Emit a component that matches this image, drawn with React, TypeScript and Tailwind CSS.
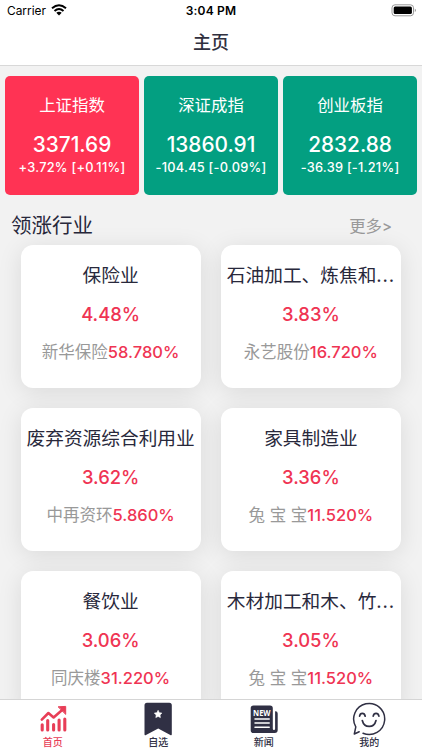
import type { ReactNode } from "react";

interface MarketIndex {
  name: string;
  value: string;
  change: string;
  up: boolean;
}

interface Industry {
  name: string;
  rate: string;
  stock: string;
  stockRate: string;
}

const indexes: MarketIndex[] = [
  { name: "上证指数", value: "3371.69", change: "+3.72% [+0.11%]", up: true },
  { name: "深证成指", value: "13860.91", change: "-104.45 [-0.09%]", up: false },
  { name: "创业板指", value: "2832.88", change: "-36.39 [-1.21%]", up: false },
];

const industries: Industry[] = [
  { name: "保险业", rate: "4.48%", stock: "新华保险", stockRate: "58.780%" },
  { name: "石油加工、炼焦和...", rate: "3.83%", stock: "永艺股份", stockRate: "16.720%" },
  { name: "废弃资源综合利用业", rate: "3.62%", stock: "中再资环", stockRate: "5.860%" },
  { name: "家具制造业", rate: "3.36%", stock: "兔 宝 宝", stockRate: "11.520%" },
  { name: "餐饮业", rate: "3.06%", stock: "同庆楼", stockRate: "31.220%" },
  { name: "木材加工和木、竹...", rate: "3.05%", stock: "兔 宝 宝", stockRate: "11.520%" },
];

const ChartIcon = () => (
  <svg width="34" height="34" viewBox="0 0 34 34" fill="none" stroke="currentColor" strokeLinecap="round">
    <path d="M5.8 17.6L12.4 11L17.6 15.4L27 7.3" strokeWidth="2.6" strokeLinejoin="round" />
    <path d="M22.5 4.8L29.7 4.4V12Z" fill="currentColor" strokeWidth="1" strokeLinejoin="round" />
    <path d="M6.2 22.8V28M11.7 18.6V28M17.6 22.6V28M23.1 18V28M28.8 17V28" strokeWidth="3.1" />
  </svg>
);

const BookmarkIcon = () => (
  <svg width="34" height="34" viewBox="0 0 34 34" fill="currentColor">
    <path d="M6 .8H28.3Q30.8 .8 30.8 3.3V32.3Q30.8 33.8 29.3 33L17.2 26.5L5 33Q3.5 33.8 3.5 32.3V3.3Q3.5 .8 6 .8Z" />
    <path d="M17.1 8.3L18.3 10.7L20.9 11.1L19 13L19.4 15.6L17.1 14.4L14.8 15.6L15.2 13L13.3 11.1L15.9 10.7Z" fill="white" stroke="white" strokeWidth=".6" strokeLinejoin="round" />
  </svg>
);

const NewsIcon = () => (
  <svg width="34" height="34" viewBox="0 0 34 34" fill="currentColor">
    <path d="M6.5 3.5H23Q25.8 3.5 25.8 6.3V26.8Q25.8 28 27 28Q28.1 28 28.1 26.8V9.3H28.5Q30.7 9.3 30.7 11.5V28Q30.7 31 27.7 31H6.5Q3.7 31 3.7 28.2V6.3Q3.7 3.5 6.5 3.5Z" />
    <text x="14.8" y="13.6" textAnchor="middle" fontSize="8.6" fontWeight="700" fill="white" textLength="17.5" lengthAdjust="spacingAndGlyphs" fontFamily="Open Sans, sans-serif">NEW</text>
    <path d="M8 17H22.2M8 21H22.2M8 25.2H22.2" stroke="white" strokeWidth="1.5" strokeLinecap="round" />
  </svg>
);

const SmileIcon = () => (
  <svg width="34" height="34" viewBox="0 0 34 34" fill="none" stroke="currentColor" strokeWidth="1.5" strokeLinecap="round" strokeLinejoin="round">
    <path d="M11 31.2A15.5 15.5 0 1 0 3.8 24.8L2.3 32L7.2 29.7" />
    <path d="M7.6 14.2C8.2 10.5 12.4 10.5 13.2 14.2M21.2 14.2C21.9 10.5 26.2 10.5 26.9 14.2M10.3 18.5C11.2 22.2 13.7 24.4 17.2 24.4C20.7 24.4 23.1 22.2 24 18.5" strokeWidth="1.7" />
  </svg>
);

const tabs: { label: string; icon: ReactNode; active?: boolean }[] = [
  { label: "首页", icon: <ChartIcon />, active: true },
  { label: "自选", icon: <BookmarkIcon /> },
  { label: "新闻", icon: <NewsIcon /> },
  { label: "我的", icon: <SmileIcon /> },
];

const StatusBar = () => (
  <div className="grid h-[21px] grid-cols-3 items-center px-[7px] text-black">
    <div className="flex items-center gap-[5px] pt-px text-[11.9px]">
      <span>Carrier</span>
      <svg className="-mt-[2px]" width="16" height="12" viewBox="0 0 16 12" fill="none" stroke="currentColor" strokeWidth="2">
        <path d="M1 4.3Q8-1.7 15 4.3M3.5 7Q8 3 12.5 7" />
        <path d="M5.3 8.8Q8 6.8 10.7 8.8L8 11.5Z" fill="currentColor" stroke="none" />
      </svg>
    </div>
    <span className="pt-px text-center text-[12px] font-semibold tracking-[0.2px]">3:04 PM</span>
    <svg className="-mr-[2px] justify-self-end" width="26" height="13" viewBox="0 0 26 13">
      <rect x="1" y=".8" width="21.5" height="11" rx="3" fill="none" stroke="#999" />
      <rect x="2.7" y="2.5" width="18.2" height="7.6" rx="1.5" fill="black" />
      <path d="M23.8 4.5Q26 6.3 23.8 8.1Z" fill="#888" />
    </svg>
  </div>
);

const IndexCard = ({ item }: { item: MarketIndex }) => (
  <div className={`flex h-[119px] flex-col items-center rounded-[5px] whitespace-nowrap text-white ${item.up ? "bg-[#ff3354]" : "bg-[#039f81]"}`}>
    <span className="mt-[17px] text-[16.4px] leading-6">{item.name}</span>
    <span className="mt-[15px] text-[20.8px] leading-[26px] font-medium">{item.value}</span>
    <span className="text-[12.8px] leading-5 font-medium tracking-[0.25px]">{item.change}</span>
  </div>
);

const IndustryCard = ({ item }: { item: Industry }) => (
  <div className="flex h-[143px] flex-col items-center rounded-xl bg-white shadow-[0_4px_24px_rgba(0,0,0,0.1)]">
    <span className="mt-4 text-[18.7px] leading-[30px] whitespace-nowrap text-[#28283b]">
      {item.name.replace("...", "")}
      {item.name.endsWith("...") && <span className="tracking-[0.8px]">...</span>}
    </span>
    <span className="mt-[10px] text-[18.4px] leading-[26px] font-medium text-[#ef3453]">{item.rate}</span>
    <span className="mt-3 text-[16.5px] leading-[26px] whitespace-nowrap text-[#999]">
      {item.stock}
      <span className="font-medium text-[#ef3453]">{item.stockRate}</span>
    </span>
  </div>
);

export default function App() {
  return (
    <div className="flex h-[750px] w-[422px] flex-col overflow-hidden bg-[#f2f2f2] font-['Inter','Noto_Sans_CJK_SC',sans-serif]">
      <header className="h-[66px] shrink-0 border-b border-[#d8d8d8] bg-white">
        <StatusBar />
        <h1 className="text-center text-[18px] leading-[44px] font-medium text-[#30303f]">主页</h1>
      </header>

      <main className="min-h-0 flex-1 overflow-hidden">
        <section className="grid grid-cols-3 gap-[5px] px-[5px] pt-[9.5px]">
          {indexes.map((item) => (
            <IndexCard key={item.name} item={item} />
          ))}
        </section>

        <div className="mt-[13px] flex h-[37px] items-center justify-between pr-[30px] pl-[11px]">
          <h2 className="text-[20.5px] text-[#28283b]">领涨行业</h2>
          <span className="text-[16.4px] text-[#999]">更多<span className="text-[15px] font-medium">&gt;</span></span>
        </div>

        <section className="grid grid-cols-2 gap-5 pr-[21px] pl-[20.5px] pt-[0.5px]">
          {industries.map((item) => (
            <IndustryCard key={item.name} item={item} />
          ))}
        </section>
      </main>

      <nav className="grid h-[51px] shrink-0 grid-cols-4 border-t border-[#d5d5d5] bg-white">
        {tabs.map((tab) => (
          <div key={tab.label} className={`flex flex-col items-center pt-[2px] ${tab.active ? "text-[#e83e57]" : "text-[#303044]"}`}>
            {tab.icon}
            <span className="text-[10px] leading-3 font-medium">{tab.label}</span>
          </div>
        ))}
      </nav>
    </div>
  );
}
